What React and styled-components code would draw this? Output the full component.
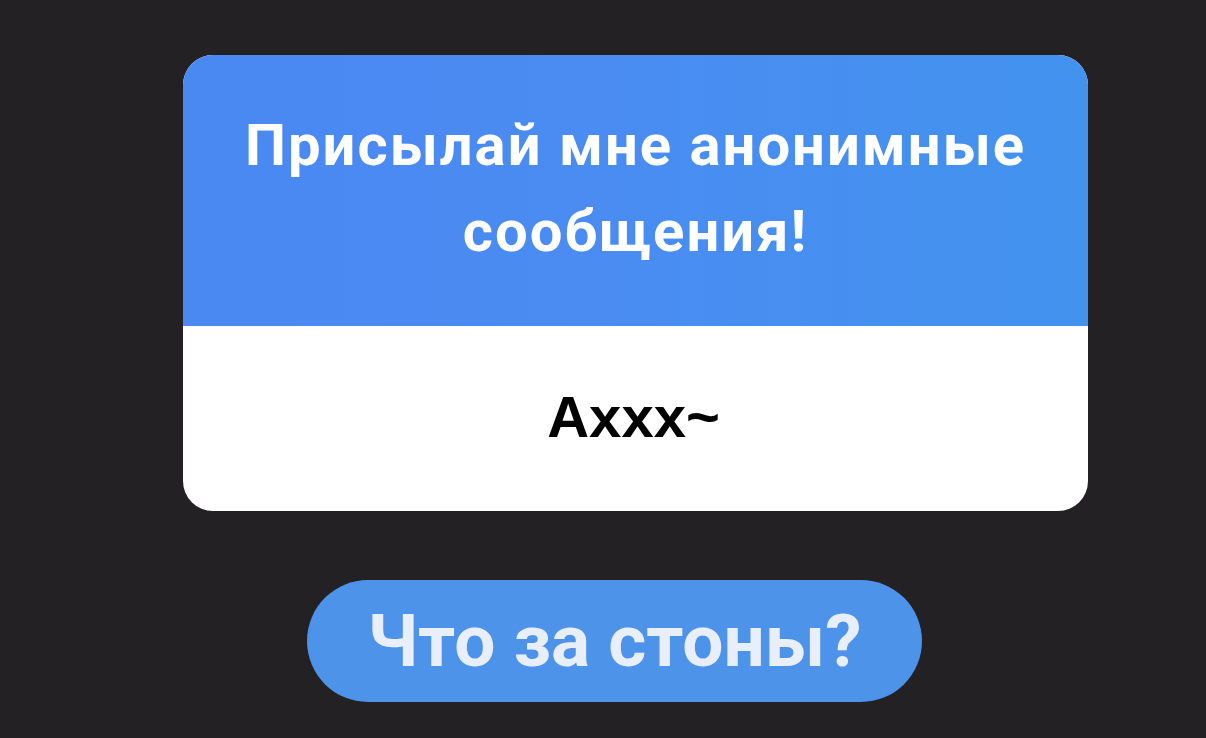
import React from 'react';
import styled, { createGlobalStyle } from 'styled-components';

const GlobalStyle = createGlobalStyle`
  html, body {
    margin: 0;
    padding: 0;
    background: #232124;
  }
  #root {
    min-height: 100vh;
  }
`;

const Page = styled.div`
  box-sizing: border-box;
  min-height: 100vh;
  padding: 55px 0 0 183px;
  display: flex;
  flex-direction: column;
  align-items: flex-start;
`;

const Card = styled.div`
  width: 905px;
  border-radius: 30px;
  overflow: hidden;
  background: #ffffff;
`;

const CardHeader = styled.div`
  box-sizing: border-box;
  height: 271px;
  padding-top: 47px;
  background: linear-gradient(90deg, #4a88f2 0%, #4a8cf2 45%, #4292ee 100%);
  color: #ffffff;
  font-family: Roboto, "Noto Sans", sans-serif;
  font-weight: 700;
  font-size: 58px;
  line-height: 86px;
  letter-spacing: 2px;
  text-align: center;
`;

const CardBody = styled.div`
  box-sizing: border-box;
  height: 185px;
  padding: 0 4px 4px 0;
  display: flex;
  align-items: center;
  justify-content: center;
  color: #000000;
  font-family: "Liberation Sans", Arial, sans-serif;
  font-weight: 700;
  font-size: 58px;
`;

const AskButton = styled.button`
  margin: 69px 0 0 124px;
  width: 615px;
  height: 122px;
  border: none;
  border-radius: 61px;
  background: #4d93ea;
  display: flex;
  align-items: center;
  justify-content: center;
  padding: 0;
  cursor: pointer;
`;

const ButtonLabel = styled.span`
  display: inline-block;
  color: #e8effb;
  font-family: Roboto, "Noto Sans", sans-serif;
  font-weight: 700;
  font-size: 73px;
  line-height: 1;
  white-space: nowrap;
`;

export default function App() {
  return (
    <>
      <GlobalStyle />
      <Page>
        <Card>
          <CardHeader>
            Присылай мне анонимные
            <br />
            сообщения!
          </CardHeader>
          <CardBody>Axxx~</CardBody>
        </Card>
        <AskButton>
          <ButtonLabel>Что за стоны?</ButtonLabel>
        </AskButton>
      </Page>
    </>
  );
}
